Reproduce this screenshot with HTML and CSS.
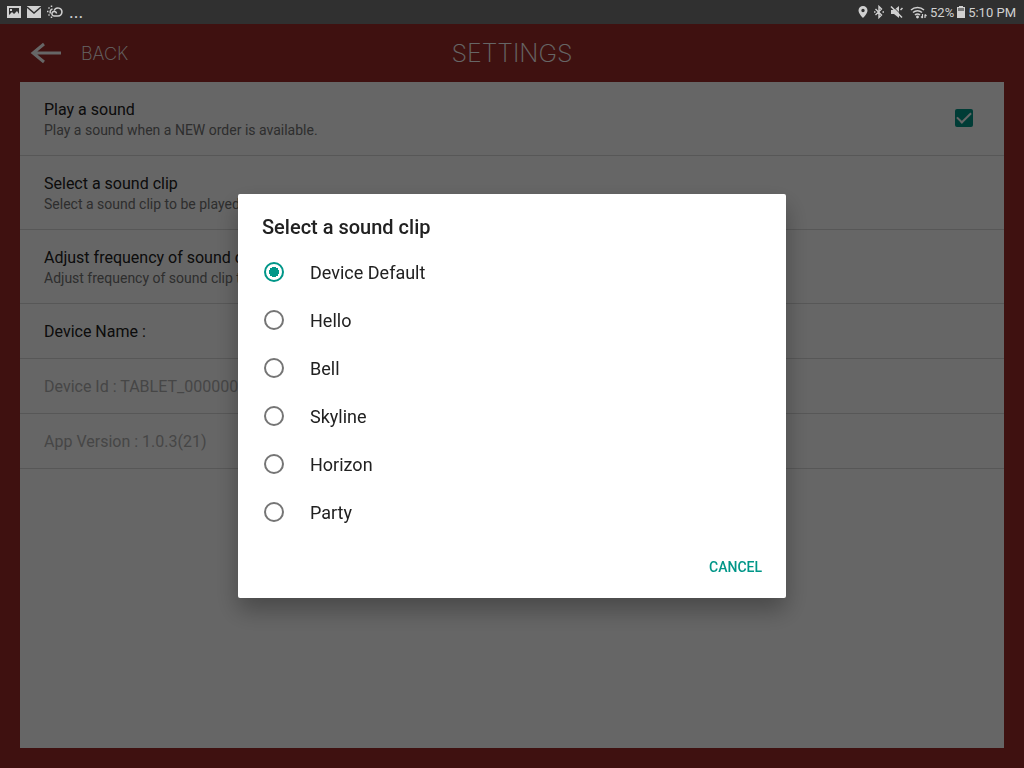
FILE: index.html
```html
<!DOCTYPE html>
<html lang="en">
<head>
  <meta charset="UTF-8">
  <meta name="viewport" content="width=device-width, initial-scale=1">
  <title>Settings</title>
  <link rel="stylesheet" href="styles.css">
</head>
<body>
  <div class="status-bar">
    <div class="status-left">
      <svg width="14" height="14" viewBox="0 0 14 14"><path fill="currentColor" fill-rule="evenodd" d="M0 1h14v12H0zM2 3v7l3-3 2 2 3-3 2 3V3zM3 4h2v2H3z"/></svg>
      <svg width="14" height="14" viewBox="0 0 14 14"><path fill="currentColor" d="M0 1h14v12H0z"/><path d="M0 2l7 6 7-6" fill="none" stroke="#303030" stroke-width="1.5"/></svg>
      <svg width="16" height="14" viewBox="0 0 16 14" fill="none" stroke="currentColor" stroke-width="1.5"><path d="M9.500 8.500A2.300 2.300 0 1 0 7.500 11H11a4 4 0 1 0-3.800-5.500"/><path d="M5.500 4A3 3 0 0 0 3.500 8.500"/><path d="M4.500 .5V2M1.500 2.500l1 1M0 6.500h1.500M1.500 10.500l1-1M4.500 11.500V13"/></svg>
      <span class="more">...</span>
    </div>
    <div class="status-right">
      <svg width="10" height="14" viewBox="0 0 10 14"><path fill="currentColor" fill-rule="evenodd" d="M5 1a4.500 4.500 0 0 0-4.500 4.500C.5 8.500 5 13 5 13s4.500-4.500 4.500-7.500A4.500 4.500 0 0 0 5 1zm0 2.800a1.700 1.700 0 1 1 0 3.400 1.700 1.700 0 0 1 0-3.400z"/></svg>
      <svg class="bluetooth" width="10" height="14" viewBox="0 0 10 14"><path d="M1.500 4l6 6L5 12.500v-11L7.500 4l-6 6M0 7h1.500M8.500 7H10" fill="none" stroke="currentColor" stroke-width="1.400"/></svg>
      <svg class="mute" width="13" height="14" viewBox="0 0 13 14"><path fill="currentColor" d="M1 5h3l5-4v12L4 9H1z"/><path d="M2 .5l11 11" stroke="#303030" stroke-width="1"/><path d="M1 1.500l11 11M10.500 5l2-2" stroke="currentColor" stroke-width="1.500"/></svg>
      <svg width="17" height="14" viewBox="0 0 17 14" fill="none" stroke="currentColor" stroke-width="1.500"><path d="M1 5a9.500 9.500 0 0 1 13 0M3 7.500a6.500 6.500 0 0 1 9 0M5 10a3.500 3.500 0 0 1 5 0"/><circle cx="7.500" cy="12" r=".7" fill="currentColor"/><path d="M12.500 9v4M11 11.500l1.500 1.500M15 13V9.500M16.500 11L15 9.500" stroke-width="1.200"/></svg>
      <span class="battery-level">52%</span>
      <svg width="8" height="12" viewBox="0 0 8 12"><path fill="currentColor" d="M2 0h4v1h2v11H0V1h2z"/><path fill="#777" d="M1 2h6v3H1z"/></svg>
      <span class="clock">5:10 PM</span>
    </div>
  </div>

  <div class="screen">
    <header class="header">
      <button class="back" type="button">
        <svg width="32" height="22" viewBox="0 0 32 22"><path d="M14 2L3 11l11 9M3 11h28" fill="none" stroke="currentColor" stroke-width="3"/></svg>
        <span>BACK</span>
      </button>
      <h1>SETTINGS</h1>
    </header>

    <main class="panel">
      <div class="row">
        <label for="play">
          <span class="name">Play a sound</span>
          <span class="summary">Play a sound when a NEW order is available.</span>
        </label>
        <input type="checkbox" id="play" checked>
      </div>
      <div class="row">
        <div>
          <span class="name">Select a sound clip</span>
          <span class="summary">Select a sound clip to be played for a new order.</span>
        </div>
      </div>
      <div class="row">
        <div>
          <span class="name">Adjust frequency of sound clip</span>
          <span class="summary">Adjust frequency of sound clip to be played.</span>
        </div>
      </div>
      <div class="row"><span class="name">Device Name :</span></div>
      <div class="row disabled"><span class="name">Device Id : TABLET_0000000</span></div>
      <div class="row disabled"><span class="name">App Version : 1.0.3(21)</span></div>
    </main>
  </div>

  <div class="overlay">
    <form class="dialog" role="dialog" aria-labelledby="dialog-title">
      <h2 id="dialog-title">Select a sound clip</h2>
      <div class="options">
        <label><input type="radio" name="clip" checked>Device Default</label>
        <label><input type="radio" name="clip">Hello</label>
        <label><input type="radio" name="clip">Bell</label>
        <label><input type="radio" name="clip">Skyline</label>
        <label><input type="radio" name="clip">Horizon</label>
        <label><input type="radio" name="clip">Party</label>
      </div>
      <div class="actions">
        <button type="button" class="cancel">CANCEL</button>
      </div>
    </form>
  </div>
</body>
</html>
```
FILE: styles.css
```css
* {
  box-sizing: border-box;
}

body {
  margin: 0;
  min-height: 100vh;
  display: flex;
  flex-direction: column;
  font-family: Roboto, sans-serif;
  background: #9e2b28;
  color: #212121;
}

.status-bar {
  height: 24px;
  padding: 0 8px 0 7px;
  display: flex;
  justify-content: space-between;
  background: #303030;
  color: #d0d0d0;
  font-size: 13px;
}

.status-left,
.status-right {
  display: flex;
  align-items: center;
}

.status-left {
  gap: 6px;
}

.status-right {
  gap: 3px;
}

.bluetooth {
  margin-left: 3px;
}

.mute {
  margin: 0 4px 0 3px;
}

.more {
  font-size: 18px;
  line-height: 18px;
}

.screen {
  flex: 1;
  display: flex;
  flex-direction: column;
  padding: 0 20px 20px;
}

.header {
  height: 58px;
  display: grid;
  grid-template-columns: 1fr auto 1fr;
  align-items: center;
  color: #fff;
  font-family: Inter, sans-serif;
}

.back {
  display: flex;
  align-items: center;
  gap: 19px;
  padding: 0 10px;
  border: none;
  background: none;
  color: inherit;
  font-family: inherit;
  font-size: 18px;
  font-weight: 200;
}

h1 {
  margin: 0;
  font-size: 25px;
  font-weight: 200;
}

.panel {
  flex: 1;
  background: #fff;
}

.row {
  display: flex;
  align-items: center;
  justify-content: space-between;
  padding: 17px 31px 15px 24px;
  border-bottom: 1px solid #dadada;
}

.name,
.summary {
  display: block;
}

.name {
  font-size: 16px;
  line-height: 22px;
}

.summary {
  font-size: 14px;
  line-height: 19px;
  color: #737373;
}

.disabled {
  color: #b0b0b0;
}

input {
  appearance: none;
  margin: 0;
  flex: none;
}

input[type="checkbox"] {
  width: 18px;
  height: 18px;
  margin-bottom: 3px;
  border-radius: 2px;
  background: #009688;
  display: grid;
  place-items: center;
}

input[type="checkbox"]:checked::after {
  content: "";
  width: 12px;
  height: 6px;
  border: solid #fff;
  border-width: 0 0 2px 2px;
  transform: translateY(-2px) rotate(-45deg);
}

.overlay {
  position: fixed;
  inset: 24px 0 0;
  display: flex;
  align-items: center;
  justify-content: center;
  background: rgba(0, 0, 0, 0.6);
}

.dialog {
  width: 548px;
  max-width: 90%;
  background: #fff;
  border-radius: 2px;
  box-shadow: 0 12px 24px rgba(0, 0, 0, 0.3);
}

h2 {
  margin: 0;
  padding: 20px 24px 8px;
  font-size: 20px;
  line-height: 26px;
  font-weight: 500;
}

.options label {
  display: flex;
  align-items: center;
  gap: 26px;
  height: 48px;
  padding: 0 26px;
  font-size: 18px;
}

input[type="radio"] {
  width: 20px;
  height: 20px;
  border: 2px solid #757575;
  border-radius: 50%;
}

input[type="radio"]:checked {
  border-color: #009688;
  background: radial-gradient(circle, #009688 5px, transparent 5px);
}

.actions {
  display: flex;
  justify-content: flex-end;
  padding: 13px 16px 13px;
}

.cancel {
  height: 36px;
  padding: 0 8px;
  border: none;
  background: none;
  color: #009688;
  font-family: inherit;
  font-size: 14px;
  font-weight: 500;
}
```
